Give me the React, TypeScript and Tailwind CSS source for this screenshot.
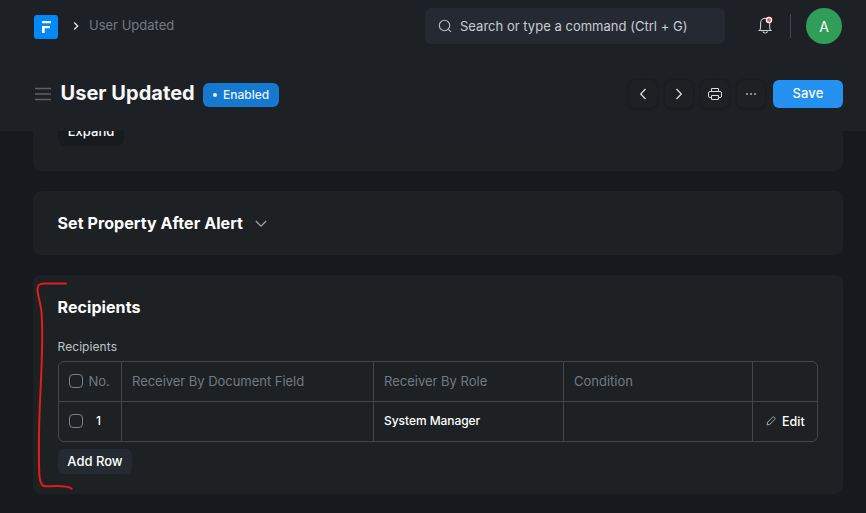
import React from "react";

const iconButton =
  "flex h-[30px] w-[30px] items-center justify-center rounded-lg border border-[#191d20] bg-[#1d2124] text-[#d8dadd] shadow-sm";

function Navbar() {
  return (
    <header className="flex h-[59px] shrink-0 items-start border-b border-[#1b1f23] bg-[#1d2125] pl-[34px] pr-6 pt-2">
      <div className="flex h-9 items-center pt-0.5">
        <svg width="24" height="24" viewBox="0 0 24 24" className="shrink-0">
          <rect width="24" height="24" rx="3" fill="#0289f7" />
          <path d="M8 6h9v2.200H8zM8 11h8v2.200h-5.300V18H8z" fill="#fff" />
        </svg>
        <svg width="8" height="10" viewBox="0 0 8 10" fill="none" className="ml-[14px] mt-[-2px]">
          <path d="M2.200 1.500 5.700 5 2.200 8.500" stroke="#e4e6e8" strokeWidth="1.300" />
        </svg>
        <span className="ml-[9px] mt-[-4px] text-[13px] leading-5 text-[#757a82]">User Updated</span>
      </div>
      <div className="ml-auto flex h-9 w-[300px] items-center rounded-md bg-[#252a32] pl-[13px]">
        <svg width="14" height="14" viewBox="0 0 14 14" fill="none" stroke="#b9bdc4" strokeWidth="1.100">
          <circle cx="6.500" cy="6.500" r="5.200" />
          <path d="m10.300 10.300 2.700 2.500" />
        </svg>
        <span className="ml-[8px] mt-px text-[13px] tracking-[0.020px] text-[#c8ccd3]">Search or type a command (Ctrl + G)</span>
      </div>
      <svg width="18" height="20" viewBox="0 0 18 20" fill="none" className="ml-[31px] mt-[7px]">
        <path d="M3.800 15c.7-1 .8-2.100.8-3.500V8.200A4.700 4.700 0 0 1 9 3.300c2.700 0 4.600 2 4.600 4.800v3.400c0 1.400.1 2.500.8 3.500M2.500 15.500h13.300M7 16.200c.2 2.300 4.200 2.300 4.400 0" stroke="#c9ccd1" strokeWidth="1.100" />
        <circle cx="13" cy="5" r="3.200" fill="#fff" />
        <circle cx="13" cy="5" r="2" fill="#ff5858" />
      </svg>
      <div className="ml-4 mt-1.5 h-6 w-px bg-[#42474d]" />
      <div className="ml-[15px] flex h-9 w-9 items-center justify-center rounded-full bg-[#309d58] text-[14px] text-white">A</div>
    </header>
  );
}

function PageHead() {
  return (
    <div className="flex h-[72px] shrink-0 items-center bg-[#1d2125] pl-[35px] pr-[23px]">
      <svg width="16" height="14" viewBox="0 0 16 14" className="-mt-0.5">
        <path d="M0 1.500h16M0 7h16M0 12.500h16" stroke="#5c6167" strokeWidth="1.500" />
      </svg>
      <h1 className="ml-[9.500px] mt-[-5px] w-[134.500px] whitespace-nowrap text-[20px] font-bold leading-7 tracking-[0.040px] text-[#f8f8f8]">User Updated</h1>
      <span className="ml-2 flex h-6 w-[76px] items-center rounded-md bg-[#1579d0] pl-[10px] text-[12px] font-medium text-[#e8f3fd]">
        <i className="mr-[6px] h-1 w-1 rounded-full bg-[#e8f3fd]" />
        Enabled
      </span>
      <div className="-mt-0.5 ml-auto flex items-center gap-1.5">
        <button className={iconButton}>
          <svg width="8" height="12" viewBox="0 0 8 12" fill="none"><path d="M6.500 1 1.700 6l4.800 5" stroke="currentColor" strokeWidth="1.300" /></svg>
        </button>
        <button className={iconButton}>
          <svg width="8" height="12" viewBox="0 0 8 12" fill="none"><path d="m1.500 1 4.800 5-4.800 5" stroke="currentColor" strokeWidth="1.300" /></svg>
        </button>
        <button className={iconButton}>
          <svg width="14" height="14" viewBox="0 0 14 14" fill="none" stroke="currentColor">
            <path d="M3.500 4.500V1.500h7v3M3.500 10.500H2A1.500 1.500 0 0 1 .5 9V6A1.500 1.500 0 0 1 2 4.500h10A1.500 1.500 0 0 1 13.500 6v3a1.500 1.500 0 0 1-1.500 1.500h-1.500" />
            <path d="M3.500 8.500h7v4h-7z" />
          </svg>
        </button>
        <button className={iconButton}>
          <svg width="12" height="4" viewBox="0 0 12 4" fill="#878b91"><path d="M1 1h2v2H1zM5 1h2v2H5zM9 1h2v2H9z" /></svg>
        </button>
        <button className="ml-px h-7 w-[70px] rounded-md bg-[#2490ef] text-[13px] font-medium tracking-[0.100px] text-white">Save</button>
      </div>
    </div>
  );
}

function Checkbox() {
  return <span className="-mt-px h-[14px] w-[14px] shrink-0 rounded-[4px] border border-[#7b8087]" />;
}

const columns = "grid grid-cols-[62px_252px_190px_189px_65px]";
const headCell = "flex h-full items-center border-[#42474c] pl-[10px] text-[13px] text-[#727a81]";
const cell = "flex h-full items-center border-[#42474c] pl-[10px] text-[12px] font-medium text-white";

function Recipients() {
  return (
    <section className="h-[219px] shrink-0 rounded-lg bg-[#1d2124] px-[25px] pt-[20px]">
      <h2 className="-ml-[0.500px] text-[16px] font-bold leading-6 tracking-[0.080px] text-white">Recipients</h2>
      <p className="-ml-[0.500px] mt-[18px] text-[12px] leading-5 tracking-[0.080px] text-[#c0c4c9]">Recipients</p>
      <div className="mt-1 w-[760px] rounded-md border border-[#42474c]">
        <div className={columns + " h-10 border-b border-[#42474c]"}>
          <div className={headCell}><Checkbox /><span className="ml-[5.500px]">No.</span></div>
          <div className={headCell + " border-l tracking-[-0.030px]"}>Receiver By Document Field</div>
          <div className={headCell + " border-l"}>Receiver By Role</div>
          <div className={headCell + " border-l"}>Condition</div>
          <div className={headCell + " border-l"} />
        </div>
        <div className={columns + " h-[39px]"}>
          <div className={cell}><Checkbox /><span className="-mt-0.5 ml-[13px]">1</span></div>
          <div className={cell + " border-l"} />
          <div className={cell + " border-l"}><span className="-mt-0.5 tracking-[-0.050px]">System Manager</span></div>
          <div className={cell + " border-l"} />
          <div className={cell + " border-l"}>
            <svg width="10" height="10" viewBox="0 0 10 10" fill="none" className="-mt-px ml-[3px]">
              <path d="M1 9l.7-2.900L6.600 1.200a1.200 1.200 0 0 1 1.700 0l.5.5a1.200 1.200 0 0 1 0 1.700L3.900 8.300z" stroke="#a5a9ae" />
            </svg>
            <span className="ml-[6px] mt-px text-[12.500px]">Edit</span>
          </div>
        </div>
      </div>
      <button className="mt-[7px] block h-[25px] w-[74px] rounded-md bg-[#252931] text-[13px] font-medium text-white">Add Row</button>
    </section>
  );
}

export default function App() {
  return (
    <div className="relative flex h-[513px] w-[866px] flex-col overflow-hidden bg-[#16191d] font-['Inter','Liberation_Sans',sans-serif]">
      <Navbar />
      <PageHead />
      <main className="flex min-h-0 flex-1 flex-col gap-5 overflow-hidden pl-[33px] pr-[23px]">
        <section className="flex h-10 shrink-0 items-start overflow-hidden rounded-b-lg bg-[#1d2124] pl-[25px]">
          <button className="-mt-[13px] h-7 w-[66px] rounded-lg bg-[#171a1e] text-[13px] font-medium text-white">Expand</button>
        </section>
        <section className="flex h-16 shrink-0 items-center rounded-lg bg-[#1d2124] pl-[24.500px]">
          <h2 className="w-[185.500px] whitespace-nowrap text-[16px] font-bold tracking-[0.080px] text-white">Set Property After Alert</h2>
          <svg width="12" height="8" viewBox="0 0 12 8" fill="none" className="ml-3 mt-px"><path d="m.8 1 5.200 5.200L11.200 1" stroke="#a4a9ae" strokeWidth="1.100" /></svg>
        </section>
        <Recipients />
      </main>
      <svg width="866" height="513" viewBox="0 0 866 513" fill="none" className="pointer-events-none absolute left-0 top-0">
        <path d="M66 283.500H44c-5 0-6.500 1.500-6.500 5.500 0 6 3 13 4 23 1 13 .8 28 .4 43-.4 21-2.200 46-2.700 70-.3 16-.4 34 0 47 .4 10 2 14 5.500 14.300 8 .2 20-1.900 27 2.300" stroke="#e61b1e" strokeWidth="2" strokeLinecap="round" strokeLinejoin="round" />
      </svg>
    </div>
  );
}
